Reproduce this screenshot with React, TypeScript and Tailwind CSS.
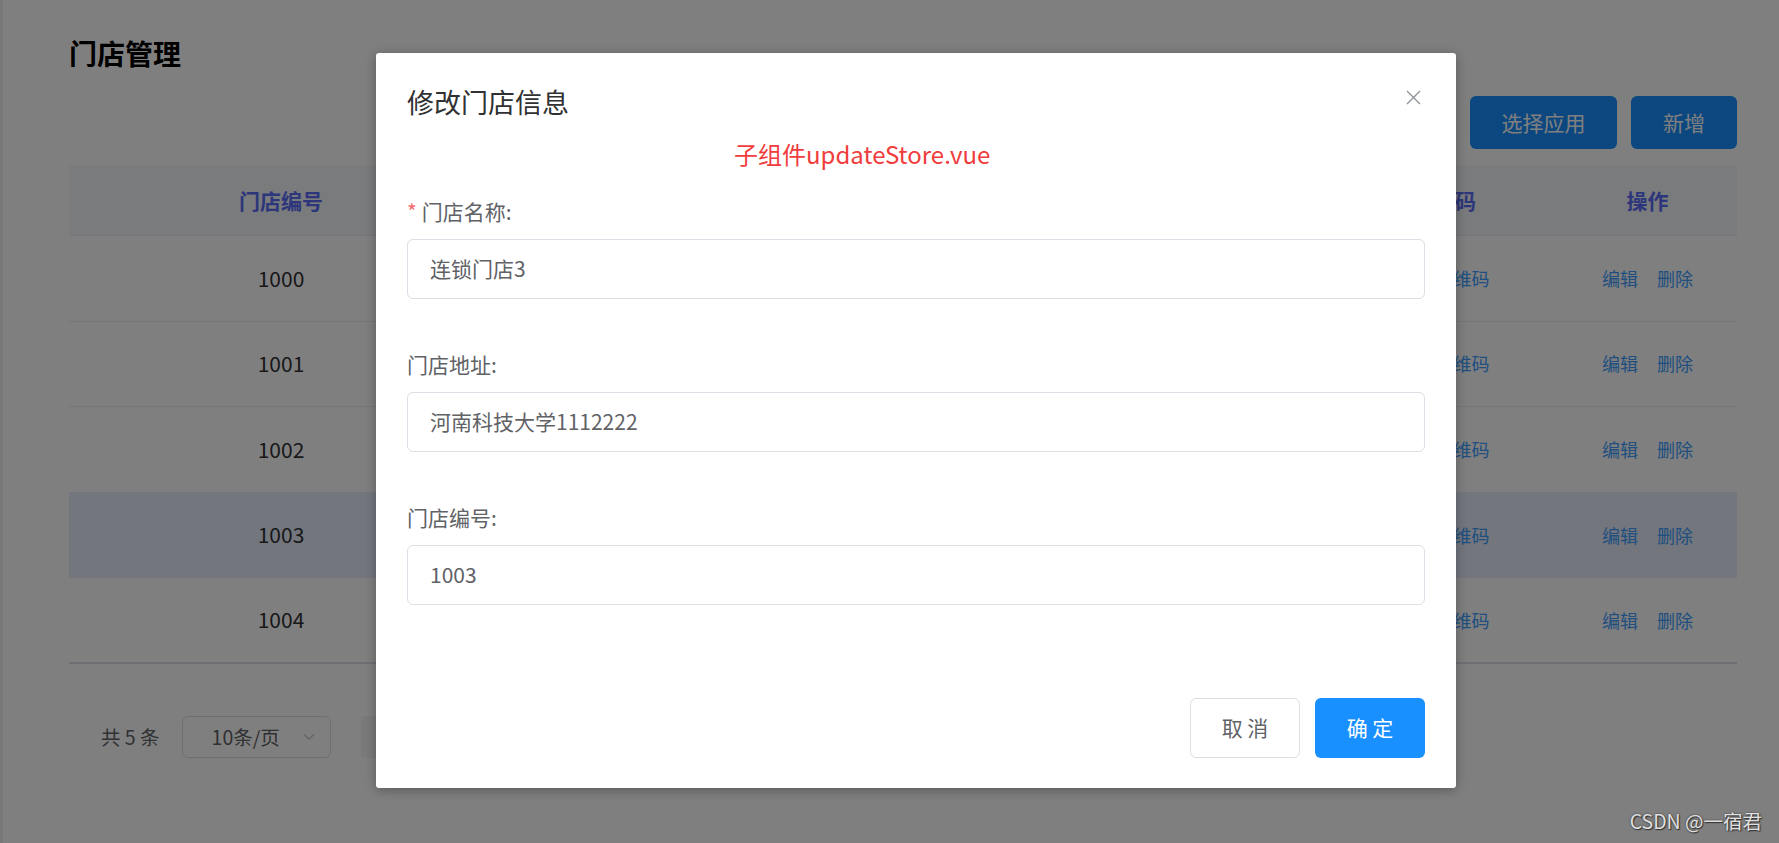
import { ChevronDown } from "lucide-react";

const rows = [
  { no: "1000", name: "连锁门店0", addr: "河南科技大学" },
  { no: "1001", name: "连锁门店1", addr: "河南科技大学" },
  { no: "1002", name: "连锁门店2", addr: "河南科技大学" },
  { no: "1003", name: "连锁门店3", addr: "河南科技大学1112222" },
  { no: "1004", name: "连锁门店4", addr: "河南科技大学" },
];

const cols = "grid grid-cols-[424px_419px_419px_227px_179px]";

function StoreTable() {
  return (
    <div className="mt-[17px] w-[1668px]">
      {/* header */}
      <div className={`${cols} h-[70px] items-center bg-[#f5f7fa] border-b border-[#ebeef5] text-[21px] font-bold text-[#5b6df5]`}>
        <div className="text-center">门店编号</div>
        <div className="text-center">门店名称</div>
        <div className="text-center">门店地址</div>
        <div className="text-center">二维码</div>
        <div className="text-center">操作</div>
      </div>
      {rows.map((r, i) => (
        <div
          key={r.no}
          className={`${cols} h-[85.6px] items-center border-b ${
            i === rows.length - 1 ? "border-b-2 border-[#dcdfe6]" : "border-[#ebeef5]"
          } ${r.no === "1003" ? "bg-[#e6edfb]" : ""}`}
        >
          <div className="text-center text-[21px] text-[#303133]">{r.no}</div>
          <div className="text-center text-[21px] text-[#303133]">{r.name}</div>
          <div className="text-center text-[21px] text-[#303133]">{r.addr}</div>
          <div className="text-center text-[18px] text-[#409eff]">查看二维码</div>
          <div className="flex justify-center gap-[19px] text-[18px] text-[#409eff]">
            <span>编辑</span>
            <span>删除</span>
          </div>
        </div>
      ))}
    </div>
  );
}

function Pagination() {
  return (
    <div className="mt-[52px] ml-[32px] flex h-[42px] items-center text-[19.5px] text-[#606266]">
      <span>共 5 条</span>
      <div className="ml-[22px] flex h-[42px] w-[149px] items-center rounded-[6px] border border-[#dcdfe6] pl-[29px] pr-[12px]">
        <span className="flex-1">10条/页</span>
        <ChevronDown className="h-[18px] w-[18px] text-[#c0c4cc]" strokeWidth={1.5} />
      </div>
      <div className="ml-[30px] h-[42px] w-[45px] rounded-[3px] bg-[#f4f4f5]" />
      <div className="ml-[15px] flex h-[42px] w-[45px] items-center justify-center rounded-[3px] bg-[#409eff] text-white">
        1
      </div>
      <div className="ml-[15px] h-[42px] w-[45px] rounded-[3px] bg-[#f4f4f5]" />
    </div>
  );
}

function Field({ label, value, required }: { label: string; value: string; required?: boolean }) {
  return (
    <div className="mb-[47px]">
      <div className="pb-[10px] text-[21px] leading-[36px] text-[#606266]">
        {required && <span className="mr-[5px] text-[#f56c6c]">*</span>}
        {label}
      </div>
      <div className="flex h-[60px] items-center rounded-[6px] border border-[#dcdfe6] bg-white px-[22px] text-[21px] text-[#606266]">
        {value}
      </div>
    </div>
  );
}

function EditDialog() {
  return (
    <div className="absolute left-[376px] top-[53px] flex h-[735px] w-[1080px] flex-col rounded-[3px] bg-white shadow-[0_2px_12px_rgba(0,0,0,0.3)]">
      <div className="px-[31px] pt-[31px]">
        <div className="text-[27px] leading-[36px] text-[#303133]">修改门店信息</div>
      </div>
      <button className="absolute right-[35px] top-[37px] h-[15px] w-[15px]">
        <svg viewBox="0 0 15 15" className="h-[15px] w-[15px]">
          <path d="M1 1L14 14M14 1L1 14" stroke="#909399" strokeWidth="1.4" fill="none" />
        </svg>
      </button>
      <div className="mt-[16px] pl-[358px] text-[24px] leading-[36px] text-[#f03c3c]">子组件updateStore.vue</div>

      <div className="mt-[21px] px-[31px]">
        <Field label="门店名称:" value="连锁门店3" required />
        <Field label="门店地址:" value="河南科技大学1112222" />
        <Field label="门店编号:" value="1003" />
      </div>

      <div className="mt-auto flex justify-end gap-[15px] px-[31px] pb-[30px]">
        <button className="h-[60px] w-[110px] rounded-[6px] border border-[#dcdfe6] bg-white text-[21px] text-[#606266]">
          取 消
        </button>
        <button className="h-[60px] w-[110px] rounded-[6px] bg-[#1890ff] text-[21px] text-white">
          确 定
        </button>
      </div>
    </div>
  );
}

export default function App() {
  return (
    <div
      className="relative h-[843px] w-[1779px] overflow-hidden bg-white"
      style={{ fontFamily: '"Noto Sans CJK SC", "Noto Sans", sans-serif' }}
    >
      <div className="absolute left-0 top-0 h-full w-[3px] bg-[#eef0f5]" />

      {/* page behind the dialog */}
      <div className="pl-[69px] pt-[33px]">
        <h1 className="text-[28px] font-bold leading-[40px] text-black">门店管理</h1>
        <div className="mt-[23px] flex w-[1668px] justify-end gap-[14px]">
          <button className="h-[53px] w-[147px] rounded-[6px] bg-[#1890ff] text-[21px] text-white">选择应用</button>
          <button className="h-[53px] w-[106px] rounded-[6px] bg-[#1890ff] text-[21px] text-white">新增</button>
        </div>
        <StoreTable />
        <Pagination />
      </div>

      {/* modal mask */}
      <div className="absolute inset-0 bg-black/50" />
      <EditDialog />

      <div className="absolute bottom-[8px] right-[17px] text-[19.5px] text-[#e0e0e0] [text-shadow:0_0_2px_#333,1px_1px_1px_#333]">
        CSDN @一宿君
      </div>
    </div>
  );
}
